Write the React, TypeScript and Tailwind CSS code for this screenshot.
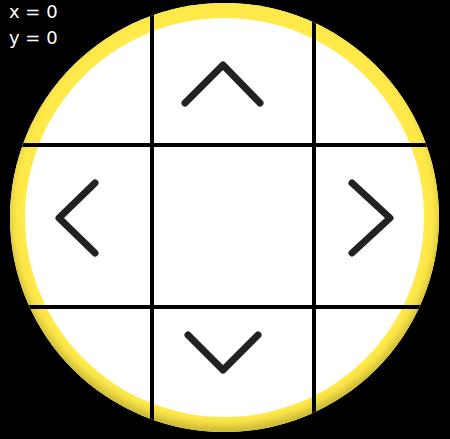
import React from "react";

type Dir = "up" | "down" | "left" | "right";

// chevron shapes, drawn in their own little boxes
const CHEVRONS: Record<Dir, { w: number; h: number; d: string }> = {
  up: { w: 90, h: 50, d: "M7 44 L45 6 L82 44" },
  down: { w: 84, h: 49, d: "M7 7 L42 42 L77 7" },
  left: { w: 50, h: 84, d: "M43 7 L7 42 L43 77" },
  right: { w: 52, h: 84, d: "M7 7 L45 42 L7 77" },
};

const Chevron = ({ dir }: { dir: Dir }) => {
  const c = CHEVRONS[dir];
  return (
    <svg width={c.w} height={c.h} viewBox={`0 0 ${c.w} ${c.h}`} fill="none" className="shrink-0">
      <path d={c.d} stroke="#222222" strokeWidth={7} strokeLinecap="round" strokeLinejoin="round" />
    </svg>
  );
};

export default function App() {
  return (
    <div className="relative w-[450px] h-[439px] bg-black overflow-hidden pt-[3px] pl-[10px]">
      {/* d-pad */}
      <div className="w-[429px] h-[429px] rounded-full overflow-hidden bg-white shadow-[inset_0_-6px_8px_rgba(60,50,0,0.28),inset_0_0_0_15px_#ffea4a]">
        <div className="grid grid-cols-[144px_162px_1fr] grid-rows-[144px_162px_1fr] w-full h-full">
          <div className="border-black border-r-4 border-b-4" />
          <div className="flex items-start border-black border-r-4 border-b-4 pl-[24px] pt-[56px]">
            <Chevron dir="up" />
          </div>
          <div className="border-black border-b-4" />

          <div className="flex items-start border-black border-r-4 border-b-4 pl-[42px] pt-[29px]">
            <Chevron dir="left" />
          </div>
          <div className="border-black border-r-4 border-b-4" />
          <div className="flex items-start border-black border-b-4 pl-[29px] pt-[29px]">
            <Chevron dir="right" />
          </div>

          <div className="border-black border-r-4" />
          <div className="flex items-start border-black border-r-4 pl-[27px] pt-[19px]">
            <Chevron dir="down" />
          </div>
          <div />
        </div>
      </div>

      {/* position readout */}
      <div className="absolute top-[-1px] left-[9px] text-white text-[18px] leading-[26px] font-['DejaVu_Sans',sans-serif]">
        <div>x = 0</div>
        <div>y = 0</div>
      </div>
    </div>
  );
}
